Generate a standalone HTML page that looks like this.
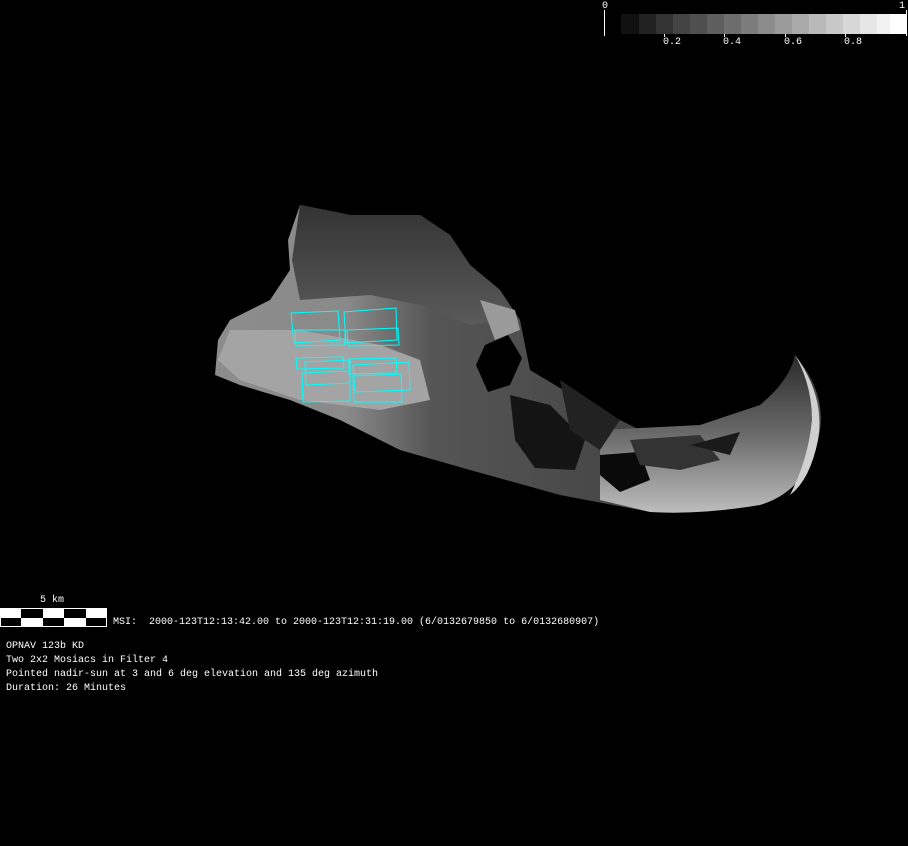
<!DOCTYPE html>
<html><head><style>
html,body{margin:0;padding:0;background:#000;width:908px;height:846px;overflow:hidden}
.t{position:absolute;color:#fff;font-family:"Liberation Mono",monospace;font-size:10px;white-space:pre;line-height:14px}
</style></head><body>
<svg width="908" height="846" style="position:absolute;left:0;top:0">
<defs>
<linearGradient id="lobe" x1="0" y1="0" x2="1" y2="0">
<stop offset="0" stop-color="#8c8c8c"/><stop offset="0.3" stop-color="#8a8a8a"/><stop offset="0.5" stop-color="#555"/><stop offset="1" stop-color="#444"/>
</linearGradient>
<linearGradient id="top" x1="0" y1="0" x2="0" y2="1">
<stop offset="0" stop-color="#333"/><stop offset="1" stop-color="#5a5a5a"/>
</linearGradient>
<linearGradient id="tail" x1="0" y1="0" x2="0" y2="1">
<stop offset="0" stop-color="#2a2a2a"/><stop offset="0.5" stop-color="#6a6a6a"/><stop offset="1" stop-color="#bdbdbd"/>
</linearGradient>
</defs>
<g>
<rect x="621" y="14" width="18" height="20" fill="#111"/>
<rect x="639" y="14" width="17" height="20" fill="#222"/>
<rect x="656" y="14" width="17" height="20" fill="#333"/>
<rect x="673" y="14" width="17" height="20" fill="#444"/>
<rect x="690" y="14" width="17" height="20" fill="#4f4f4f"/>
<rect x="707" y="14" width="17" height="20" fill="#5e5e5e"/>
<rect x="724" y="14" width="17" height="20" fill="#6d6d6d"/>
<rect x="741" y="14" width="17" height="20" fill="#7c7c7c"/>
<rect x="758" y="14" width="17" height="20" fill="#8c8c8c"/>
<rect x="775" y="14" width="17" height="20" fill="#9b9b9b"/>
<rect x="792" y="14" width="17" height="20" fill="#aaa"/>
<rect x="809" y="14" width="17" height="20" fill="#b9b9b9"/>
<rect x="826" y="14" width="17" height="20" fill="#c8c8c8"/>
<rect x="843" y="14" width="17" height="20" fill="#d7d7d7"/>
<rect x="860" y="14" width="17" height="20" fill="#e6e6e6"/>
<rect x="877" y="14" width="17" height="20" fill="#f2f2f2"/>
<rect x="890" y="14" width="16" height="20" fill="#fff"/>
<line x1="604.5" y1="10" x2="604.5" y2="36" stroke="#fff"/>
<line x1="906.5" y1="10" x2="906.5" y2="36" stroke="#fff"/>
<line x1="664.5" y1="34" x2="664.5" y2="37" stroke="#fff"/>
<line x1="724.5" y1="34" x2="724.5" y2="37" stroke="#fff"/>
<line x1="785.5" y1="34" x2="785.5" y2="37" stroke="#fff"/>
<line x1="845.5" y1="34" x2="845.5" y2="37" stroke="#fff"/>
</g>
<!-- asteroid body -->
<polygon fill="url(#lobe)" points="300,205 350,215 420,215 450,235 470,265 500,290 520,320 530,370 580,400 640,430 640,470 650,512 560,495 470,470 400,450 340,420 290,400 240,385 215,375 218,340 230,320 270,300 290,270 288,240"/>
<polygon fill="url(#top)" points="300,205 350,215 420,215 450,235 470,265 500,290 515,320 470,325 420,305 370,295 300,300 292,260"/>
<polygon fill="#a4a4a4" points="230,330 300,330 380,345 420,360 430,400 380,410 300,400 240,380 218,360"/>
<!-- tail -->
<path fill="url(#tail)" d="M600,430 L700,425 L760,405 Q790,380 795,355 Q825,390 820,430 Q810,490 760,505 Q700,515 650,512 L600,500 Z"/>
<path fill="#d0d0d0" d="M795,355 Q825,395 818,440 Q810,480 790,495 Q808,460 812,420 Q812,385 795,355 Z"/>
<!-- dark textures -->
<polygon fill="#000" points="485,345 508,335 522,358 510,385 488,392 476,365"/>
<polygon fill="#141414" points="510,395 550,405 585,440 575,470 535,468 515,440"/>
<polygon fill="#222" points="560,380 620,420 600,450 570,430"/>
<polygon fill="#0a0a0a" points="600,455 640,452 650,480 620,492 600,475"/>
<polygon fill="#333" points="630,440 700,435 720,460 680,470 640,465"/>
<polygon fill="#1a1a1a" points="690,445 740,432 730,455"/>
<polygon fill="#9a9a9a" points="480,300 515,310 520,330 495,340"/>
<g fill="none" stroke="#00ffff" stroke-width="1">
<polygon points="291,313 338,311 340,340 294,343"/>
<polygon points="344,312 396,308 397,340 346,343"/>
<polygon points="296,358 343,357 344,368 297,369"/>
<polygon points="349,359 396,358 397,373 349,374"/>
<polygon points="302,373 350,371 350,401 303,402"/>
<polygon points="353,376 401,374 402,402 354,402"/>
<polygon points="295,330 345,330 345,345 296,346"/>
<polygon points="347,330 398,328 399,345 348,346"/>
<polygon points="305,362 350,360 350,383 306,385"/>
<polygon points="353,365 409,362 410,390 355,392"/>
</g>
<rect x="0" y="608" width="107" height="19" fill="#fff"/>
<rect x="21" y="609" width="22" height="9" fill="#000"/>
<rect x="64" y="609" width="22" height="9" fill="#000"/>
<rect x="1" y="618" width="20" height="8" fill="#000"/>
<rect x="43" y="618" width="21" height="8" fill="#000"/>
<rect x="86" y="618" width="20" height="8" fill="#000"/>
</svg>
<div class="t" style="left:602px;top:0px">0</div>
<div class="t" style="left:899px;top:0px">1</div>
<div class="t" style="left:663px;top:36px">0.2</div>
<div class="t" style="left:723px;top:36px">0.4</div>
<div class="t" style="left:784px;top:36px">0.6</div>
<div class="t" style="left:844px;top:36px">0.8</div>
<div class="t" style="left:40px;top:594px">5 km</div>
<div class="t" style="left:113px;top:616px">MSI:  2000-123T12:13:42.00 to 2000-123T12:31:19.00 (6/0132679850 to 6/0132680907)</div>
<div class="t" style="left:6px;top:640px">OPNAV 123b KD
Two 2x2 Mosiacs in Filter 4
Pointed nadir-sun at 3 and 6 deg elevation and 135 deg azimuth
Duration: 26 Minutes</div>
</body></html>
